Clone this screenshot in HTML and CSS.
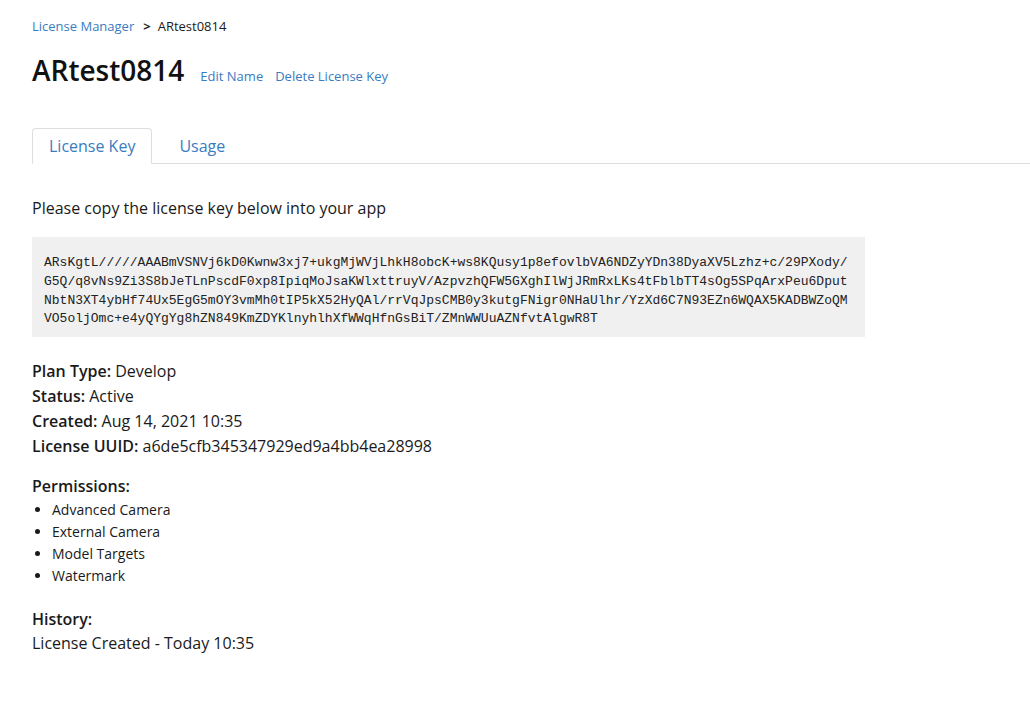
FILE: index.html
```html
<!DOCTYPE html>
<html lang="en">
<head>
  <meta charset="UTF-8">
  <title>ARtest0814 - License Manager</title>
  <link rel="stylesheet" href="styles.css">
</head>
<body>

<div class="page">
  <nav class="breadcrumb">
    <a href="#">License Manager</a>
    <span class="sep">&gt;</span>
    <span>ARtest0814</span>
  </nav>

  <div class="title-row">
    <h1>ARtest0814</h1>
    <a href="#">Edit Name</a>
    <a href="#">Delete License Key</a>
  </div>

  <ul class="tabs">
    <li class="tab active">License Key</li>
    <li class="tab">Usage</li>
  </ul>

  <p class="intro">Please copy the license key below into your app</p>

  <pre class="key">ARsKgtL/////AAABmVSNVj6kD0Kwnw3xj7+ukgMjWVjLhkH8obcK+ws8KQusy1p8efovlbVA6NDZyYDn38DyaXV5Lzhz+c/29PXody/G5Q/q8vNs9Zi3S8bJeTLnPscdF0xp8IpiqMoJsaKWlxttruyV/AzpvzhQFW5GXghIlWjJRmRxLKs4tFblbTT4sOg5SPqArxPeu6DputNbtN3XT4ybHf74Ux5EgG5mOY3vmMh0tIP5kX52HyQAl/rrVqJpsCMB0y3kutgFNigr0NHaUlhr/YzXd6C7N93EZn6WQAX5KADBWZoQMVO5oljOmc+e4yQYgYg8hZN849KmZDYKlnyhlhXfWWqHfnGsBiT/ZMnWWUuAZNfvtAlgwR8T</pre>

  <div class="details">
    <div><b>Plan Type:</b> Develop</div>
    <div><b>Status:</b> Active</div>
    <div><b>Created:</b> Aug 14, 2021 10:35</div>
    <div><b>License UUID:</b> a6de5cfb345347929ed9a4bb4ea28998</div>
  </div>

  <div class="section">
    <h3>Permissions:</h3>
    <ul class="perms">
      <li>Advanced Camera</li>
      <li>External Camera</li>
      <li>Model Targets</li>
      <li>Watermark</li>
    </ul>
  </div>

  <div class="section">
    <h3>History:</h3>
    <div class="history">License Created - Today 10:35</div>
  </div>
</div>

</body>
</html>
```

FILE: styles.css
```css
body {
  margin: 0;
  background-color: #fff;
  color: #1a1a1a;
  font-family: "Open Sans", sans-serif;
}
a {
  color: #3a7cc1;
  text-decoration: none;
}
.page {
  padding: 16px 0 40px 32px;
}
.breadcrumb {
  font-size: 13px;
  line-height: 20px;
  display: flex;
  gap: 7px;
  align-items: center;
}
.breadcrumb .sep {
  font-weight: 700;
  color: #222;
  margin: 0 0 0 2px;
}
.title-row {
  display: flex;
  align-items: baseline;
  gap: 12px;
  margin-top: 16px;
}
.title-row h1 {
  margin: 0 4px 0 0;
  font-size: 28px;
  font-weight: 600;
  line-height: 36px;
  color: #111;
}
.title-row a {
  font-size: 13px;
}
.tabs {
  list-style: none;
  margin: 40px 0 0;
  padding: 0;
  display: flex;
  border-bottom: 1px solid #ddd;
}
.tab {
  font-size: 16px;
  color: #3a7cc1;
  padding: 6px 16px 6px;
  line-height: 22px;
  border: 1px solid transparent;
  border-radius: 4px 4px 0 0;
  margin-bottom: -1px;
  margin-right: 10px;
}
.tab.active {
  border-color: #ddd;
  border-bottom-color: #fff;
  background: #fff;
}
.intro {
  font-size: 16px;
  margin: 33px 0 0;
  line-height: 22px;
}
.key {
  width: 809px;
  margin: 18px 0 0;
  padding: 17px 12px 8px;
  background-color: #f0f0f0;
  font-family: "Liberation Mono", "Courier New", monospace;
  font-size: 13px;
  line-height: 18.8px;
  color: #222;
  white-space: pre-wrap;
  word-break: break-all;
}
.details {
  margin-top: 22px;
  font-size: 16px;
  line-height: 25px;
}
.details b, .section h3 {
  font-weight: 600;
}
.section {
  margin-top: 15px;
}
.section h3 {
  font-size: 16px;
  margin: 0;
  line-height: 25px;
}
.perms {
  margin: 0;
  padding-left: 20px;
  font-size: 14px;
  line-height: 22px;
}
.section + .section {
  margin-top: 20px;
}
.section + .section h3 {
  line-height: 24px;
}
.history {
  font-size: 16px;
  line-height: 24px;
}
```
